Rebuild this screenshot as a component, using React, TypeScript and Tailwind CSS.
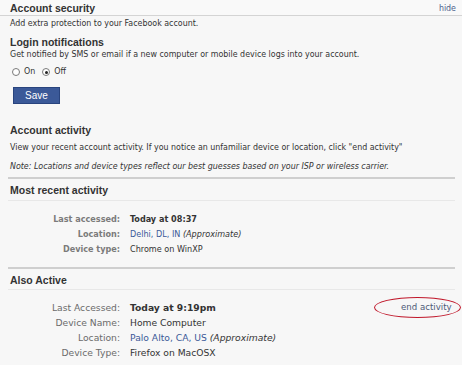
import React from "react";

const body = "font-['DejaVu_Sans_Condensed','Liberation_Sans',sans-serif]";
const head = "font-['Liberation_Sans',Arial,sans-serif] font-bold text-[10.5px] text-[#333]";
const lucida = "font-['DejaVu_Sans','Liberation_Sans',sans-serif]";

function Row({
  label,
  children,
  labelClass,
}: {
  label: string;
  children: React.ReactNode;
  labelClass: string;
}) {
  return (
    <div className="flex h-[15px] leading-[15px] whitespace-nowrap">
      <div className={`w-[120px] shrink-0 text-right ${labelClass}`}>{label}</div>
      <div className="pl-[10px]">{children}</div>
    </div>
  );
}

export default function App() {
  return (
    <div className={`w-[462px] h-[365px] bg-[#f7f7f7] text-[#333] text-[8.8px] overflow-hidden ${body}`}>
      {/* header */}
      <div className="h-[16px] flex items-center justify-between border-b border-[#d4d4d4] bg-[#f9f9f9] pl-[10px] pr-[6px]">
        <span className={`${head} leading-[14px]`}>Account security</span>
        <a className="text-[#4b5f8c] leading-[14px]">hide</a>
      </div>

      <div className="pl-[10px] whitespace-nowrap">
        <p className="leading-[14px]">Add extra protection to your Facebook account.</p>
        <p className={`mt-[6px] leading-[12px] ${head}`}>Login notifications</p>
        <p className="leading-[12px]">
          Get notified by SMS or email if a new computer or mobile device logs into your account.
        </p>

        <div className="mt-[5px] h-[14px] flex items-center pl-[2px]">
          <span className="w-[8px] h-[8px] rounded-full border border-[#7a7a7a] bg-white" />
          <span className="ml-[4px]">On</span>
          <span className="ml-[7px] w-[8px] h-[8px] rounded-full border border-[#7a7a7a] bg-white flex items-center justify-center">
            <span className="w-[3px] h-[3px] rounded-full bg-[#222]" />
          </span>
          <span className="ml-[4px]">Off</span>
        </div>

        <button className="mt-[8px] ml-[3px] w-[47px] h-[17px] bg-[#3b5998] border border-[#29447e] text-white text-[10px] leading-[14px] font-['Liberation_Sans',Arial,sans-serif]">
          Save
        </button>

        <p className={`mt-[19px] leading-[14px] ${head}`}>Account activity</p>
        <p className="mt-[3px] leading-[14px]">
          View your recent account activity. If you notice an unfamiliar device or location, click "end activity"
        </p>
        <p className="mt-[5px] italic leading-[14px]">
          Note: Locations and device types reflect our best guesses based on your ISP or wireless carrier.
        </p>
      </div>

      {/* most recent */}
      <div className="mt-[4px] ml-[8px] mr-[7px] border-t-2 border-[#cfcfcf]" />
      <p className={`mt-[4px] pl-[10px] leading-[14px] ${head}`}>Most recent activity</p>
      <div className="mt-[3px] ml-[8px] mr-[7px] border-t border-[#e8e8e8]" />
      <div className="mt-[11px] text-[9px]">
        <Row label="Last accessed:" labelClass="font-bold text-[#7b7b7b]">
          <span className="font-bold">Today at 08:37</span>
        </Row>
        <Row label="Location:" labelClass="font-bold text-[#7b7b7b]">
          <a className="text-[#3b5998]">Delhi, DL, IN</a> <i>(Approximate)</i>
        </Row>
        <Row label="Device type:" labelClass="font-bold text-[#7b7b7b]">
          Chrome on WinXP
        </Row>
      </div>

      {/* also active */}
      <div className="mt-[10px] ml-[8px] mr-[7px] border-t-2 border-[#cfcfcf]" />
      <p className={`mt-[4px] pl-[10px] leading-[14px] ${head}`}>Also Active</p>
      <div className="mt-[2px] ml-[8px] mr-[7px] border-t border-[#e8e8e8]" />
      <div className={`mt-[10px] text-[9.2px] relative ${lucida}`}>
        <Row label="Last Accessed:" labelClass="text-[#6b6b6b]">
          <span className="font-bold">Today at 9:19pm</span>
        </Row>
        <Row label="Device Name:" labelClass="text-[#6b6b6b]">
          Home Computer
        </Row>
        <Row label="Location:" labelClass="text-[#6b6b6b]">
          <a className="text-[#3b5998]">Palo Alto, CA, US</a> <i>(Approximate)</i>
        </Row>
        <Row label="Device Type:" labelClass="text-[#6b6b6b]">
          Firefox on MacOSX
        </Row>
        <a className="absolute left-[401px] top-0 text-[8.6px] leading-[15px] text-[#4e5a78]">end activity</a>
        <span className="absolute left-[374px] top-[-3px] w-[87px] h-[21px] rounded-[50%] border border-[#c0182b]" />
      </div>
    </div>
  );
}
